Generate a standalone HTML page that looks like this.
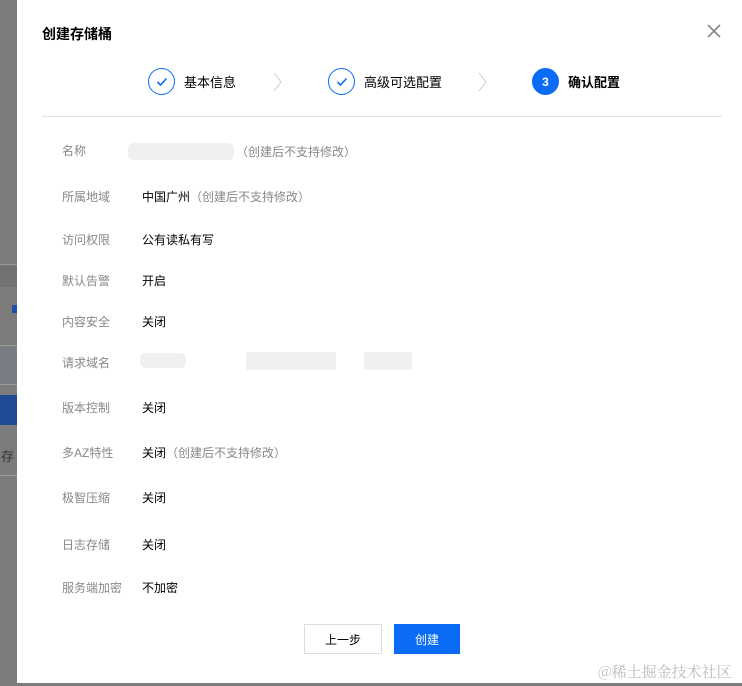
<!DOCTYPE html>
<html><head><meta charset="utf-8"><style>
*{margin:0;padding:0;box-sizing:border-box}
body{width:742px;height:686px;position:relative;overflow:hidden;background:#7c7c7c;font-family:"Liberation Sans","Noto Sans CJK SC",sans-serif;font-size:12px;color:#000}
.dlg{position:absolute;left:17px;top:0;width:725px;height:683px;background:#fff}
.t{position:absolute;left:42px;top:24px;font-size:14px;font-weight:bold;color:#000}
.x{position:absolute;left:707px;top:24px}
.step{position:absolute;top:68px;height:27px;display:flex;align-items:center;font-size:13px;color:#000}
.c{width:27px;height:27px;border:1px solid #0a6cf5;border-radius:50%;margin-right:9px;display:flex;align-items:center;justify-content:center}
.c.on{background:#0a6cf5;color:#fff;font-weight:bold;font-size:12px}
.hr{position:absolute;left:42px;top:116px;width:680px;height:1px;background:#e3e3e3}
.l{position:absolute;left:62px;color:#888;font-size:12px;line-height:14px}
.v{position:absolute;left:142px;color:#000;font-size:12px;line-height:14px}
.g{color:#888}
.b{position:absolute;background:#f0f0f0;border-radius:6px}
.btn{position:absolute;top:624px;height:30px;display:flex;align-items:center;justify-content:center;font-size:12px}
.side{position:absolute;left:0;background:#6a6a6a}
</style></head><body>
<div style="position:absolute;left:0;top:265px;width:17px;height:22px;background:#727272"></div>
<div style="position:absolute;left:0;top:345px;width:17px;height:40px;background:#7a7d84"></div>
<div class="side" style="top:264px;width:17px;height:1px;background:#9a9a9a"></div>
<div style="position:absolute;left:12px;top:305px;width:5px;height:8px;background:#1d4ea8"></div>
<div class="side" style="top:345px;width:17px;height:1px;background:#9a9a9a"></div>
<div class="side" style="top:384px;width:17px;height:1px;background:#9a9a9a"></div>
<div style="position:absolute;left:0;top:395px;width:17px;height:30px;background:#1f4a96"></div>
<div style="position:absolute;left:1px;top:446px;color:#333;font-size:13px">存</div>
<div class="side" style="top:475px;width:17px;height:1px;background:#9a9a9a"></div>
<div class="dlg"></div>
<div class="t">创建存储桶</div>
<svg class="x" width="14" height="14" viewBox="0 0 14 14"><path d="M1 1L13 13M13 1L1 13" stroke="#888" stroke-width="1.6"/></svg>
<div class="step" style="left:148px"><div class="c"><svg width="12" height="10" viewBox="0 0 12 10"><path d="M1.5 5L4.5 8L10.5 1.5" stroke="#0a6cf5" stroke-width="1.6" fill="none"/></svg></div>基本信息</div>
<svg style="position:absolute;left:273px;top:72px" width="10" height="20"><path d="M1 1L8 10L1 19" stroke="#ccc" fill="none"/></svg>
<div class="step" style="left:328px"><div class="c"><svg width="12" height="10" viewBox="0 0 12 10"><path d="M1.5 5L4.5 8L10.5 1.5" stroke="#0a6cf5" stroke-width="1.6" fill="none"/></svg></div>高级可选配置</div>
<svg style="position:absolute;left:478px;top:72px" width="10" height="20"><path d="M1 1L8 10L1 19" stroke="#ccc" fill="none"/></svg>
<div class="step" style="left:532px;font-weight:bold"><div class="c on">3</div>确认配置</div>
<div class="hr"></div>
<div class="l" style="top:144px">名称</div><div class="b" style="left:128px;top:143px;width:106px;height:17px"></div><div class="v g" style="left:236px;top:145px">（创建后不支持修改）</div>
<div class="l" style="top:190px">所属地域</div><div class="v" style="top:190px">中国广州<span class="g">（创建后不支持修改）</span></div>
<div class="l" style="top:233px">访问权限</div><div class="v" style="top:233px">公有读私有写</div>
<div class="l" style="top:274px">默认告警</div><div class="v" style="top:274px">开启</div>
<div class="l" style="top:315px">内容安全</div><div class="v" style="top:315px">关闭</div>
<div class="l" style="top:356px">请求域名</div>
<div class="b" style="left:140px;top:353px;width:46px;height:15px"></div>
<div class="b" style="left:246px;top:352px;width:90px;height:18px;border-radius:2px"></div>
<div class="b" style="left:364px;top:352px;width:48px;height:18px;border-radius:2px"></div>
<div class="l" style="top:401px">版本控制</div><div class="v" style="top:401px">关闭</div>
<div class="l" style="top:446px">多AZ特性</div><div class="v" style="top:446px">关闭<span class="g">（创建后不支持修改）</span></div>
<div class="l" style="top:491px">极智压缩</div><div class="v" style="top:491px">关闭</div>
<div class="l" style="top:538px">日志存储</div><div class="v" style="top:538px">关闭</div>
<div class="l" style="top:581px">服务端加密</div><div class="v" style="top:581px">不加密</div>
<div class="btn" style="left:304px;width:78px;border:1px solid #ddd;background:#fff">上一步</div>
<div class="btn" style="left:394px;width:66px;background:#0a6cf5;color:#fff">创建</div>
<div style="position:absolute;left:598px;top:661px;color:#bbb;font-size:15px;font-family:'Noto Serif CJK SC',serif">@稀土掘金技术社区</div>
</body></html>
